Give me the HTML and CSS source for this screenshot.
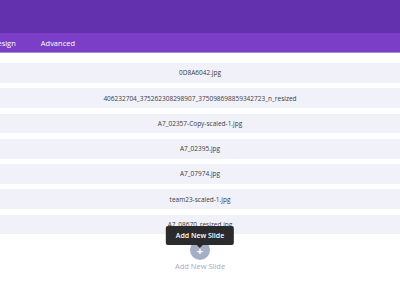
FILE: index.html
```html
<!DOCTYPE html>
<html lang="en">
<head>
  <meta charset="UTF-8">
  <title>Slider Settings</title>
  <link rel="stylesheet" href="styles.css">
</head>
<body>
  <div class="modal-head">
    <span class="modal-title">Slider Settings</span>
  </div>
  <div class="tabs">
    <span class="tab">Design</span>
    <span class="tab">Advanced</span>
  </div>
  <div class="slides">
    <div class="slide">0D8A6042.jpg</div>
    <div class="slide">406232704_375262308298907_375098698859342723_n_resized</div>
    <div class="slide">A7_02357-Copy-scaled-1.jpg</div>
    <div class="slide">A7_02395.jpg</div>
    <div class="slide">A7_07974.jpg</div>
    <div class="slide">team23-scaled-1.jpg</div>
    <div class="slide">A7_08670_resized.jpg</div>
  </div>
  <div class="add-slide">
    <div class="add-btn">
      <span class="plus">+</span>
      <div class="tooltip">Add New Slide</div>
    </div>
    <div class="add-label">Add New Slide</div>
  </div>
</body>
</html>
```

FILE: styles.css
```css
body {
  margin: 0;
  background-color: white;
  font-family: "Open Sans", Arial, sans-serif;
  overflow: hidden;
}
.modal-head {
  background-color: #6331ae;
  height: 33px;
  display: flex;
  align-items: center;
}
.modal-title {
  color: white;
  font-size: 9px;
  font-weight: 600;
  margin-left: -62px;
  margin-top: -12px;
}
.tabs {
  background-color: #7a3fc6;
  height: 19px;
  border-bottom: 1px solid #a58bd6;
  display: flex;
  align-items: center;
  gap: 25px;
}
.tab {
  color: white;
  font-size: 7.5px;
  font-weight: 500;
}
.tab:first-child {
  margin-left: -8px;
}
.slides {
  display: flex;
  flex-direction: column;
  gap: 5.5px;
  padding-top: 10px;
}
.slide {
  background-color: #f1f1fa;
  height: 19.75px;
  display: flex;
  align-items: center;
  justify-content: center;
  font-size: 6.5px;
  color: #3c3c3c;
}
.add-slide {
  display: flex;
  flex-direction: column;
  align-items: center;
  padding-top: 6px;
}
.add-btn {
  position: relative;
  width: 20px;
  height: 20px;
  border-radius: 50%;
  background-color: #a2afc4;
  display: flex;
  align-items: center;
  justify-content: center;
}
.plus {
  color: white;
  font-size: 11px;
  font-weight: 700;
  line-height: 1;
}
.tooltip {
  position: absolute;
  bottom: 15px;
  left: 50%;
  transform: translateX(-50%);
  background-color: #2b2b2d;
  color: white;
  font-size: 7px;
  font-weight: 600;
  white-space: nowrap;
  padding: 5px 10px;
  border-radius: 2px;
}
.tooltip::after {
  content: "";
  position: absolute;
  top: 100%;
  left: 50%;
  margin-left: -3px;
  border: 3px solid transparent;
  border-top-color: #2b2b2d;
}
.add-label {
  color: #a3abc0;
  font-size: 7.5px;
  font-weight: 500;
  margin-top: 1px;
}
```
